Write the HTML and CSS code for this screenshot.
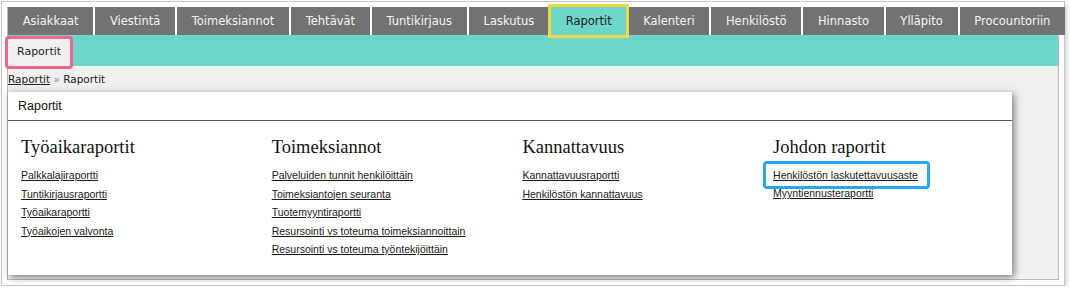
FILE: index.html
```html
<!DOCTYPE html>
<html lang="fi">

<head>
    <meta charset="UTF-8">
    <title>Raportit</title>
    <link rel="stylesheet" href="styles.css">
</head>

<body>
    <div class="frame">
        <div class="app">
            <div class="tabs">
                <a class="tab">Asiakkaat</a>
                <a class="tab">Viestintä</a>
                <a class="tab">Toimeksiannot</a>
                <a class="tab">Tehtävät</a>
                <a class="tab">Tuntikirjaus</a>
                <a class="tab">Laskutus</a>
                <a class="tab active">Raportit</a>
                <a class="tab">Kalenteri</a>
                <a class="tab">Henkilöstö</a>
                <a class="tab">Hinnasto</a>
                <a class="tab">Ylläpito</a>
                <a class="tab last">Procountoriin</a>
            </div>

            <div class="subbar">
                <a class="subtab">Raportit</a>
            </div>

            <div class="breadcrumb">
                <a href="#">Raportit</a> <span class="sep">»</span> Raportit
            </div>

            <div class="panel">
                <div class="panel-header">Raportit</div>
                <div class="panel-body">
                    <div class="col">
                        <h2>Työaikaraportit</h2>
                        <a href="#">Palkkalajiraportti</a>
                        <a href="#">Tuntikirjausraportti</a>
                        <a href="#">Työaikaraportti</a>
                        <a href="#">Työaikojen valvonta</a>
                    </div>
                    <div class="col">
                        <h2>Toimeksiannot</h2>
                        <a href="#">Palveluiden tunnit henkilöittäin</a>
                        <a href="#">Toimeksiantojen seuranta</a>
                        <a href="#">Tuotemyyntiraportti</a>
                        <a href="#">Resursointi vs toteuma toimeksiannoittain</a>
                        <a href="#">Resursointi vs toteuma työntekijöittäin</a>
                    </div>
                    <div class="col">
                        <h2>Kannattavuus</h2>
                        <a href="#">Kannattavuusraportti</a>
                        <a href="#">Henkilöstön kannattavuus</a>
                    </div>
                    <div class="col">
                        <h2>Johdon raportit</h2>
                        <a href="#" class="highlight">Henkilöstön laskutettavuusaste</a>
                        <a href="#">Myyntiennusteraportti</a>
                    </div>
                </div>
            </div>
        </div>
    </div>
</body>

</html>
```

FILE: styles.css
```css
* {
    margin: 0;
    padding: 0;
    box-sizing: border-box;
}

body {
    background: #ffffff;
    font-family: "DejaVu Sans", Verdana, sans-serif;
    overflow: hidden;
}

.frame {
    margin: 1px 0 0 1px;
    width: 1064px;
    height: 285px;
    border: 1px solid #c6c6c6;
    padding: 5px;
    box-shadow: 2px 3px 4px rgba(0, 0, 0, 0.18);
}

.app {
    height: 100%;
    background: #f0f0f0;
    border: 1px solid #b9b9b9;
    border-top: none;
}

/* main tabs */
.tabs {
    display: flex;
    gap: 2px;
    background: #ffffff;
}

.tab {
    height: 28px;
    line-height: 28px;
    padding: 0 14.7px;
    background: #737373;
    color: #f4f4f4;
    font-size: 11.5px;
    text-align: center;
    white-space: nowrap;
}

.tab.last {
    flex: 1;
}

.tab.active {
    background: #6dd5c9;
    color: #1e1e1e;
    outline: 3px solid #f0d84c;
    outline-offset: 0;
    position: relative;
}

/* sub navigation */
.subbar {
    height: 31px;
    background: #6dd5c9;
    display: flex;
    align-items: flex-end;
}

.subtab {
    height: 27px;
    line-height: 25px;
    padding: 0 9px;
    background: #f0f0f0;
    color: #1e1e1e;
    font-size: 11px;
    outline: 3px solid #ef6788;
    border-radius: 1px;
    position: relative;
    z-index: 1;
}

.breadcrumb {
    height: 24px;
    line-height: 27px;
    font-size: 10.5px;
    color: #222;
}

.breadcrumb a {
    color: #222;
}

.breadcrumb .sep {
    color: #888;
}

/* report panel */
.panel {
    margin-top: 2px;
    width: 1004px;
    height: 183px;
    background: #ffffff;
    box-shadow: 2px 2px 7px rgba(0, 0, 0, 0.5);
}

.panel-header {
    height: 29px;
    line-height: 29px;
    padding-left: 10px;
    border-bottom: 1px solid #555;
    font-family: "Liberation Sans", Arial, sans-serif;
    font-size: 12.5px;
    color: #111;
}

.panel-body {
    display: grid;
    grid-template-columns: repeat(4, 250.7px);
    padding: 15px 0 0 13px;
}

.col h2 {
    font-family: "Liberation Serif", Georgia, serif;
    font-weight: normal;
    font-size: 18.5px;
    line-height: 22px;
    color: #111;
    margin-bottom: 8px;
}

.col a {
    display: block;
    width: max-content;
    font-family: "Liberation Sans", Tahoma, sans-serif;
    font-size: 10.5px;
    line-height: 18.5px;
    color: #1a1a1a;
}

.col a.highlight {
    outline: 3px solid #2aa5f0;
    outline-offset: 0;
    border-radius: 1px;
    padding: 2px 9px 2px 7px;
    margin: -2px 0 -2px -7px;
    line-height: 18px;
}
```
